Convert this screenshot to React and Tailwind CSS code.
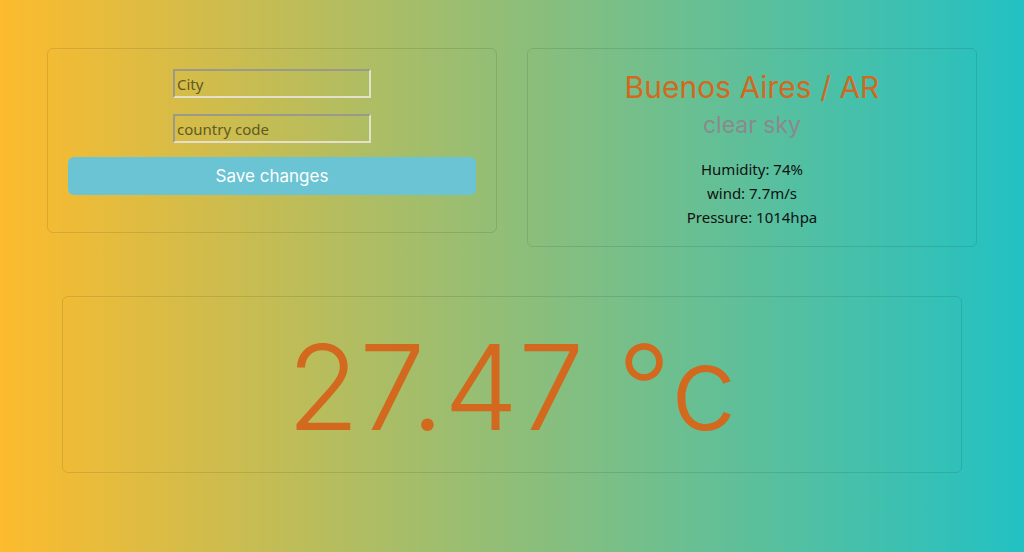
import React from 'react';

const heading = { fontFamily: 'Inter, "Open Sans", sans-serif' };

const App = () => {
  return (
    <div className="w-full h-[552px] bg-[linear-gradient(90deg,#fdbb2d,#22c1c3)] font-['Noto_Sans',sans-serif]">
      <div className="w-[960px] mx-auto px-[15px] pt-12">
        <div className="grid grid-cols-2 gap-[30px] items-start">
          {/* Form */}
          <div className="border border-black/10 rounded-md h-[185px] pt-5 px-5 flex flex-col items-center">
            <input
              placeholder="City"
              className="w-[198px] h-[29px] px-0.5 text-[15px] bg-transparent border-2 border-t-[#9a9a8a] border-l-[#9a9a8a] border-b-[#e4e0cc] border-r-[#e4e0cc] placeholder:text-[#5f5a24] outline-none"
            />
            <input
              placeholder="country code"
              className="mt-4 w-[198px] h-[29px] px-0.5 text-[15px] bg-transparent border-2 border-t-[#9a9a8a] border-l-[#9a9a8a] border-b-[#e4e0cc] border-r-[#e4e0cc] placeholder:text-[#5f5a24] outline-none"
            />
            <button
              style={heading}
              className="mt-3.5 w-full h-[38px] rounded-md bg-[#6bc4d4] text-white text-[17px] pt-0.5"
            >
              Save changes
            </button>
          </div>

          {/* Current weather */}
          <div className="border border-black/10 rounded-md h-[199px] pt-5 flex flex-col items-center">
            <h1 style={heading} className="text-[30px] leading-9 text-[#d2691e]">Buenos Aires / AR</h1>
            <h2 style={heading} className="text-[23px] leading-8 text-[#8a8a8a] mt-1">clear sky</h2>
            <div className="mt-4 text-[15px] leading-6 text-[#111] text-center">
              <p>Humidity: 74%</p>
              <p>wind: 7.7m/s</p>
              <p>Pressure: 1014hpa</p>
            </div>
          </div>
        </div>

        {/* Temperature */}
        <div className="mt-[49px] mx-[15px] border border-black/10 rounded-md h-[177px] flex items-center justify-center">
          <span style={heading} className="text-[118px] leading-none font-light text-[#d2691e] mt-1">
            27.47 °c
          </span>
        </div>
      </div>
    </div>
  );
};

export default App;
